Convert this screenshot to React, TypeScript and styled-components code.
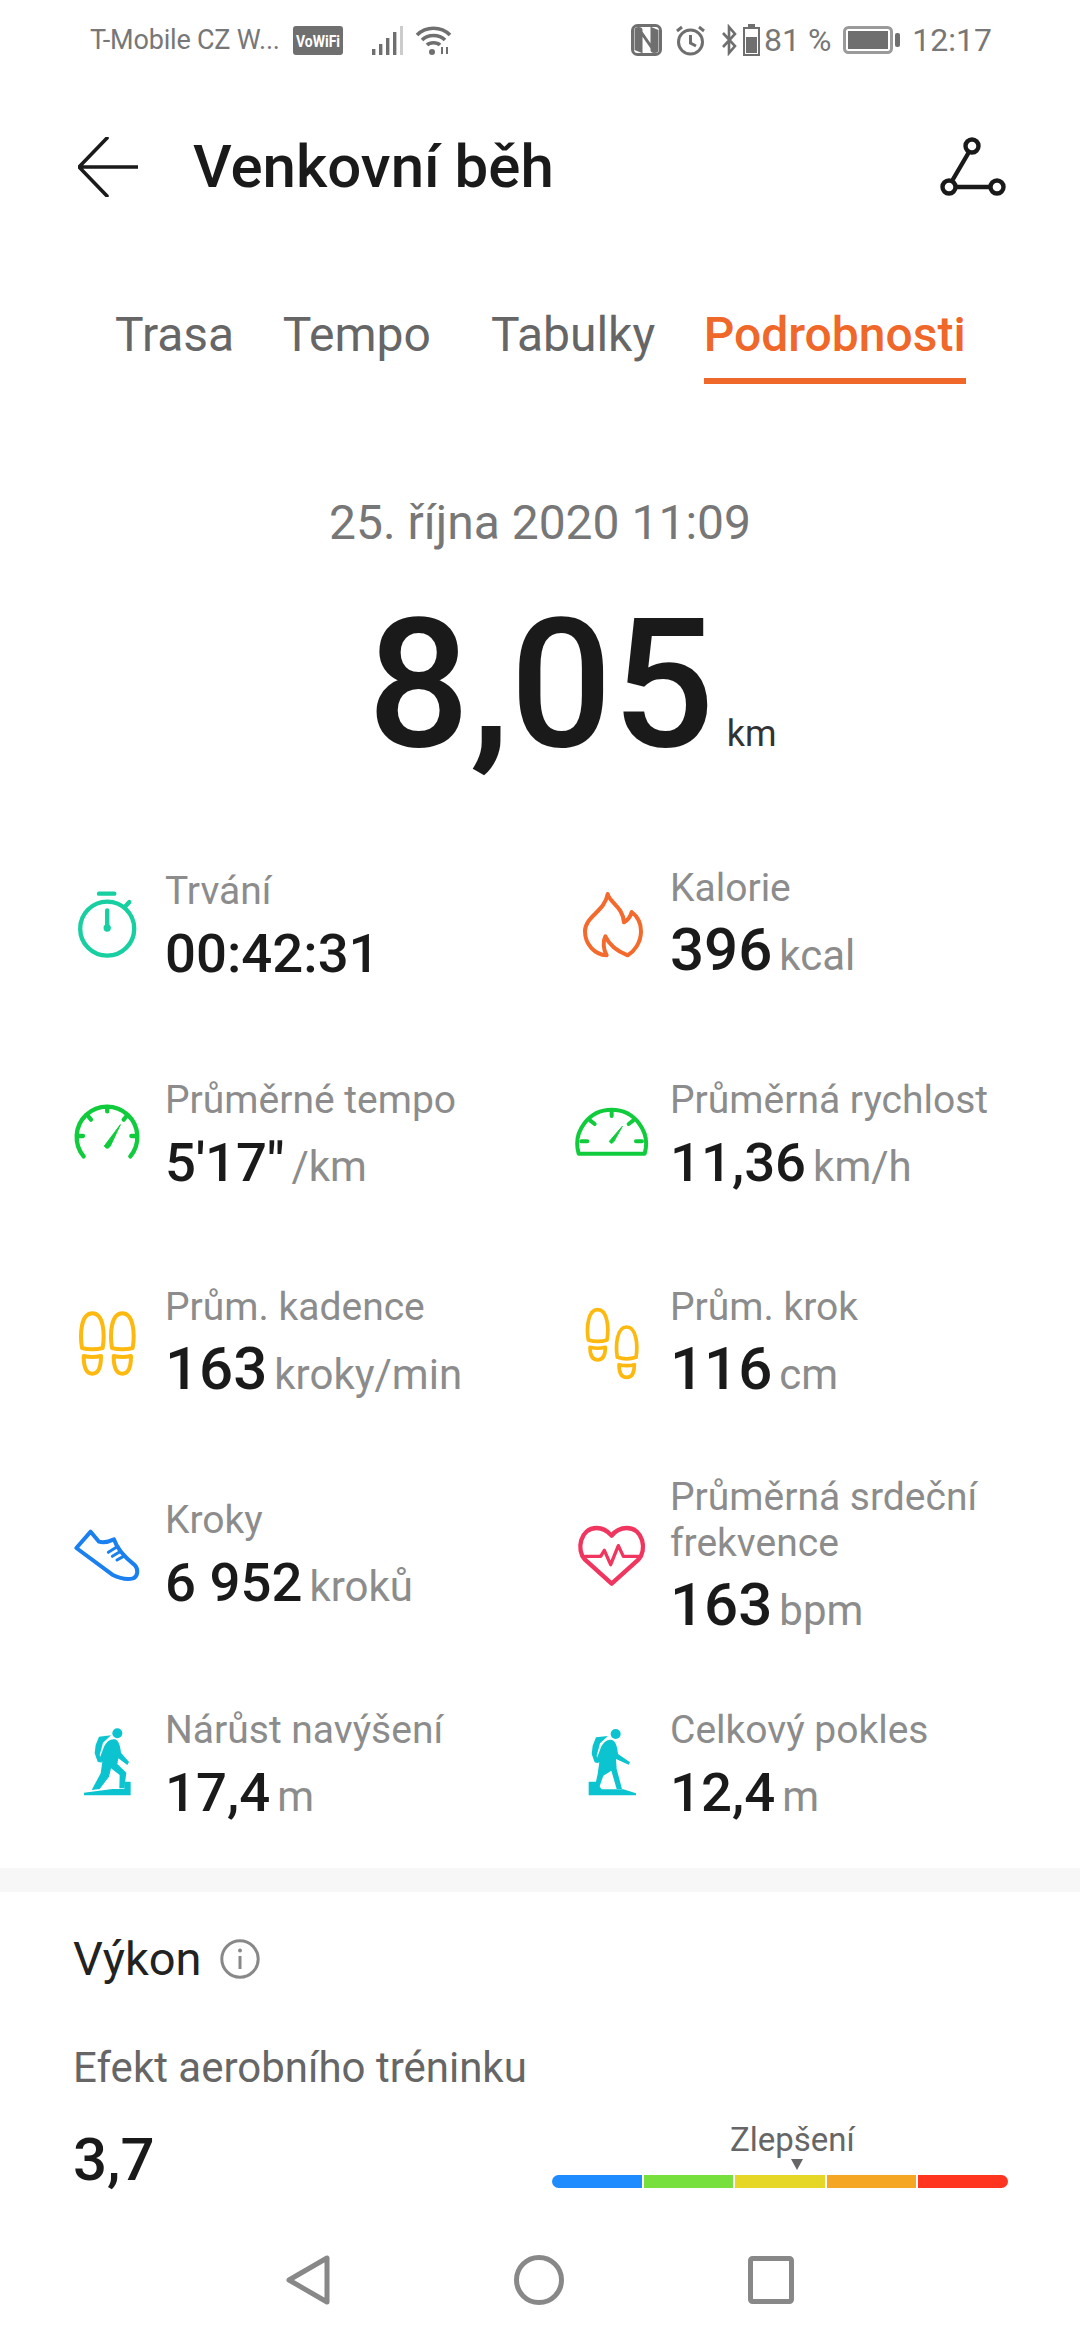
import React from "react";
import styled, { createGlobalStyle } from "styled-components";

const Global = createGlobalStyle`
  html, body { margin: 0; padding: 0; background: #fff; }
  body { font-family: Roboto, "Liberation Sans", sans-serif; }
`;

const Page = styled.div`
  width: 1080px; height: 2340px; overflow: hidden; background: #fff;
  display: flex; flex-direction: column;
`;
const StatusBar = styled.div`
  height: 80px; display: flex; align-items: center; padding: 0 88px 0 90px; box-sizing: border-box;
  color: #777;
`;
const Carrier = styled.span` font-size: 27px; flex: none; margin-right: 13px; letter-spacing: -0.2px; white-space: nowrap; `;
const StatusGroup = styled.div` display: flex; align-items: center; gap: ${p => p.$gap ?? 12}px; `;
const Spacer = styled.div` flex: 1; `;
const StatusNum = styled.span` font-size: 32px; white-space: nowrap; line-height: 40px; `;
const StatusIcon = styled.svg` display: block; flex: none; `;

const Header = styled.header`
  height: 174px; display: flex; align-items: center; padding: 0 74px 0 78px; box-sizing: border-box;
`;
const Title = styled.h1`
  margin: 0 0 0 55px; font-size: 60px; font-weight: 500; color: #1a1a1a; flex: 1; line-height: 70px;
`;
const Tabs = styled.nav` display: flex; padding: 54px 0 0 115px; height: 130px; box-sizing: border-box; `;
const Tab = styled.div`
  font-size: 48px; line-height: 54px; height: 76px; box-sizing: border-box; white-space: nowrap;
  margin-right: ${p => p.$gap}px; font-weight: ${p => (p.$active ? 500 : 400)};
  color: ${p => (p.$active ? "#f0672a" : "#666")};
  border-bottom: 6px solid ${p => (p.$active ? "#f0672a" : "transparent")};
`;
const DateLine = styled.div`
  margin-top: 113px; text-align: center; font-size: 48px; line-height: 52px; color: #777;
`;
const Hero = styled.div`
  margin-top: 51px; display: flex; justify-content: center; align-items: baseline; height: 170px; padding-left: 64px;
`;
const Big = styled.span` font-size: 180px; line-height: 170px; font-weight: 500; color: #1a1a1a; `;
const BigUnit = styled.span` font-size: 36px; color: #333; margin-left: 12px; `;

const Metrics = styled.section`
  margin-top: 50px; padding-left: 67px; display: grid; grid-template-columns: 505px 504px;
  grid-template-rows: 213px 210px 204px 222px 198px; margin-bottom: 1px;
`;
const Metric = styled.div` display: flex; align-items: center; gap: 18px; `;
const IconBox = styled.svg` width: 80px; height: 80px; flex: none; display: block; `;
const MetricText = styled.div` display: flex; flex-direction: column; `;
const Label = styled.div` font-size: 39px; line-height: 46px; color: #8c8c8c; width: 330px; `;
const ValueLine = styled.div` display: flex; align-items: baseline; margin-top: 7px; white-space: nowrap; line-height: 64px; `;
const Value = styled.span` font-size: ${p => (p.$large ? 60 : 54.5)}px; font-weight: 500; color: #1a1a1a; `;
const Unit = styled.span` font-size: 42px; color: #8c8c8c; margin-left: 7px; `;

const Band = styled.div` height: 24px; background: #f7f7f7; flex: none; `;
const Perf = styled.section` padding: 41px 72px 0 73px; `;
const PerfTitleRow = styled.div` display: flex; align-items: center; gap: 18px; `;
const PerfTitle = styled.span` font-size: 47px; line-height: 52px; color: #222; `;
const Efekt = styled.div` margin-top: 60px; font-size: 42px; line-height: 46px; color: #666; `;
const ScoreRow = styled.div` display: flex; justify-content: space-between; align-items: flex-end; margin-top: 24px; height: 80px; `;
const Score = styled.span` font-size: 60px; font-weight: 500; line-height: 70px; color: #1a1a1a; `;
const Scale = styled.div` width: 456px; display: flex; flex-direction: column; margin-bottom: 7px; `;
const ScaleLabel = styled.div` font-size: 33px; line-height: 36px; color: #666; padding-left: 178px; `;
const Marker = styled.div`
  width: 0; height: 0; margin: 1px 0 5px 239px;
  border-left: 6px solid transparent; border-right: 6px solid transparent; border-top: 11px solid #666;
`;
const Bar = styled.div` display: flex; gap: 2px; height: 13px; border-radius: 7px; overflow: hidden; `;
const Seg = styled.div` flex: 1; background: ${p => p.$c}; `;
const NavBar = styled.div`
  margin-top: auto; height: 120px; display: flex; justify-content: center; align-items: center; gap: 184px;
`;

const G = ({ c, sw = 10, children }: any) => (
  <g fill="none" stroke={c} strokeWidth={sw} strokeLinecap="round" strokeLinejoin="round">{children}</g>
);

const Stopwatch = () => (
  <IconBox viewBox="54 75 240 240">
    <G c="#17cfa0" sw={13}>
      <circle cx="174.6" cy="200" r="81" />
      <path d="M150 95H196M228 134L241 120M174.6 145V198" />
    </G>
    <circle cx="174.6" cy="198" r="11" fill="#17cfa0" />
  </IconBox>
);
const Flame = () => (
  <IconBox viewBox="36 72 240 240">
    <G c="#f4692c" sw={12}>
      <path d="M143 93C150 120 188 130 192 178C205 170 212 160 215 147C232 160 243 180 243 205C243 240 222 265 203 277C180 268 150 250 136 220C128 235 130 260 140 277C105 275 75 245 75 205C75 160 135 145 143 93Z" />
    </G>
  </IconBox>
);
const GaugeOpen = () => (
  <IconBox viewBox="54 718 240 240">
    <G c="#10cc3c" sw={13}>
      <path d="M104 893A91 91 0 1 1 244 893" />
      <path d="M174.6 745V758M86 832H102M247 832H263M117 772L126 783M233 772L224 783" />
    </G>
    <path d="M214 798L184 862Q175 876 166 862Z" fill="#10cc3c" stroke="#10cc3c" strokeWidth="3" strokeLinejoin="round" />
  </IconBox>
);
const GaugeDome = () => (
  <IconBox viewBox="36 718 240 240">
    <G c="#10cc3c" sw={12}>
      <path d="M56 885A103 103 0 1 1 254 885Z" />
      <path d="M155 755V772M64 848H82M228 848H246M90 785L104 796M220 785L206 796" />
    </G>
    <path d="M187 803L162 848Q154 860 148 848Z" fill="#10cc3c" stroke="#10cc3c" strokeWidth="3" strokeLinejoin="round" />
  </IconBox>
);
const Sole = ({ x, y }: any) => (
  <g transform={`translate(${x} ${y})`}>
    <path d="M-31 108C-38 65 -34 4 0 4C34 4 38 65 31 108C14 113 -14 113 -31 108Z" />
    <path d="M-26 132C-10 136 10 136 26 132C26 165 20 185 0 185C-20 185 -26 165 -26 132Z" />
  </g>
);
const SoleSmall = ({ x, y }: any) => (
  <g transform={`translate(${x} ${y})`}>
    <path d="M-28 95C-34 60 -30 4 0 4C30 4 34 60 28 95C12 100 -12 100 -28 95Z" />
    <path d="M-23 117C-10 120 10 120 23 117C23 140 18 155 0 155C-18 155 -23 140 -23 117Z" />
  </g>
);
const FeetEven = () => (
  <IconBox viewBox="54 1332 240 240">
    <G c="#fdb90f" sw={12}><Sole x={130} y={1353} /><Sole x={220} y={1353} /></G>
  </IconBox>
);
const FeetStep = () => (
  <IconBox viewBox="36 1332 240 240">
    <G c="#fdb90f" sw={11}><SoleSmall x={113} y={1342} /><SoleSmall x={200} y={1394} /></G>
  </IconBox>
);
const Shoe = () => (
  <IconBox viewBox="54 165 240 240">
    <G c="#1a80f0" sw={12}>
      <path d="M82 255L125 206L150 236C165 240 180 236 195 229C205 260 230 285 258 307C268 318 268 340 252 346C232 351 210 345 190 335Z" />
    </G>
    <G c="#1a80f0" sw={9}>
      <path d="M178 268L207 250M190 280L215 265M204 291L222 281" />
    </G>
  </IconBox>
);
const Heart = () => (
  <IconBox viewBox="36 165 240 240">
    <G c="#f0365f" sw={13}>
      <path d="M155 362L75 290C48 262 60 195 110 195C135 195 148 210 155 218C165 205 178 195 200 195C250 195 262 262 235 290Z" />
    </G>
    <G c="#f0365f" sw={10}>
      <path d="M75 280H122L133 262L152 305L175 248L190 280H238" />
    </G>
  </IconBox>
);
const HIKER =
  "M165 860C172 845 185 835 198 838C210 842 214 860 216 878L240 906L235 915L208 895L205 912L232 938L226 985H211L212 945L186 925L180 950L152 987L128 990L155 940L160 905L148 905Z";
const PACK = "M150 830L186 826L162 848L152 885L158 908L146 905L137 880L140 855Z";
const HikerUp = () => (
  <IconBox viewBox="54 804 240 240">
    <g fill="#0cc4cf">
      <circle cx="205" cy="820" r="15" />
      <path d={HIKER} />
      <path d={PACK} />
      <path d="M105 1006V998L190 987H226V965H245V1006Z" />
    </g>
  </IconBox>
);
const HikerDown = () => (
  <IconBox viewBox="36 804 240 240">
    <g fill="#0cc4cf">
      <circle cx="167" cy="822" r="15" />
      <g transform="translate(-42 2)">
        <path d="M165 860C172 845 185 835 198 838C210 842 214 860 216 880L252 905L248 912L210 895L212 925L228 985H212L196 930L172 945L158 985H145L155 940L160 905L148 905Z" />
        <path d={PACK} />
      </g>
      <path d="M86 1006V965H108L125 988H190L228 1000V1006Z" />
    </g>
  </IconBox>
);

const metrics = [
  { icon: <Stopwatch />, label: "Trvání", value: "00:42:31" },
  { icon: <Flame />, label: "Kalorie", value: "396", unit: "kcal", large: true },
  { icon: <GaugeOpen />, label: "Průměrné tempo", value: "5'17\"", unit: "/km" },
  { icon: <GaugeDome />, label: "Průměrná rychlost", value: "11,36", unit: "km/h" },
  { icon: <FeetEven />, label: "Prům. kadence", value: "163", unit: "kroky/min", large: true },
  { icon: <FeetStep />, label: "Prům. krok", value: "116", unit: "cm", large: true },
  { icon: <Shoe />, label: "Kroky", value: "6 952", unit: "kroků" },
  { icon: <Heart />, label: "Průměrná srdeční frekvence", value: "163", unit: "bpm", large: true },
  { icon: <HikerUp />, label: "Nárůst navýšení", value: "17,4", unit: "m" },
  { icon: <HikerDown />, label: "Celkový pokles", value: "12,4", unit: "m" },
];

const tabs = [
  { t: "Trasa", gap: 48.5 },
  { t: "Tempo", gap: 60 },
  { t: "Tabulky", gap: 48.5 },
  { t: "Podrobnosti", gap: 0, active: true },
];

const C = "#6f6f6f";

export default function App() {
  return (
    <Page>
      <Global />
      <StatusBar>
        <Carrier>T-Mobile CZ W...</Carrier>
        <StatusIcon width="50" height="29" viewBox="0 0 50 29">
          <rect width="50" height="29" rx="3" fill={C} />
          <text x="25" y="21" textAnchor="middle" fontSize="17" fontWeight="700" fill="#fff" fontFamily="Roboto" textLength="44" lengthAdjust="spacingAndGlyphs">VoWiFi</text>
        </StatusIcon>
        <StatusIcon width="31" height="29" viewBox="0 0 31 29" style={{ marginLeft: 29 }}>
          <g fill={C}>
            <rect x="0" y="23" width="3.4" height="6" />
            <rect x="7" y="18" width="3.4" height="11" />
            <rect x="14" y="12" width="3.4" height="17" />
            <rect x="21" y="6" width="3.4" height="23" />
          </g>
          <rect x="28" y="0" width="3" height="29" fill="#ccc" />
        </StatusIcon>
        <StatusIcon width="37" height="29" viewBox="0 0 37 29" style={{ marginLeft: 12 }}>
          <g fill="none" stroke={C} strokeWidth="3.6">
            <path d="M2 9C11 0 26 0 35 9" />
            <path d="M7 14C13 8 24 8 30 14" />
            <path d="M12 19C15 16 22 16 25 19" />
          </g>
          <circle cx="17" cy="26" r="3" fill={C} />
          <path d="M27 28V21M32 28V21" stroke={C} strokeWidth="2" />
        </StatusIcon>
        <Spacer />
        <StatusGroup $gap={12}>
          <StatusIcon width="31" height="32" viewBox="0 0 31 32">
            <rect x="1.5" y="1.5" width="28" height="29" rx="5" fill="#fff" stroke={C} strokeWidth="3" />
            <path d="M5 6C5 4 10 4 10 6V27L5 25ZM26 26C26 28 21 28 21 26V5L26 7ZM10 8L21 24" fill={C} stroke={C} strokeWidth="3" />
          </StatusIcon>
          <StatusIcon width="33" height="32" viewBox="0 0 33 32">
            <g fill="none" stroke={C} strokeWidth="3">
              <circle cx="16.5" cy="18" r="12" />
              <path d="M16.5 11V19L22 22M3 7L8 3M30 7L25 3" />
            </g>
          </StatusIcon>
          <StatusGroup $gap={4}>
            <StatusIcon width="20" height="32" viewBox="0 0 20 32">
              <path d="M4 9L16 22L10 29V3L16 10L4 23" fill="none" stroke={C} strokeWidth="2.6" />
            </StatusIcon>
            <StatusIcon width="17" height="32" viewBox="0 0 17 32">
              <rect x="5" y="0" width="7" height="3" fill={C} />
              <rect x="1" y="4" width="15" height="27" fill="none" stroke={C} strokeWidth="2" />
              <rect x="3" y="13" width="11" height="16" fill={C} />
            </StatusIcon>
            <StatusNum>81 %</StatusNum>
          </StatusGroup>
          <StatusIcon width="57" height="28" viewBox="0 0 57 28">
            <rect x="1.5" y="1.5" width="47" height="25" rx="4" fill="none" stroke="#9a9a9a" strokeWidth="3" />
            <rect x="5" y="5" width="40" height="18" fill={C} />
            <rect x="52" y="7" width="5" height="14" rx="2" fill={C} />
          </StatusIcon>
          <StatusNum>12:17</StatusNum>
        </StatusGroup>
      </StatusBar>

      <Header>
        <svg width="60" height="60" viewBox="0 0 60 60" style={{ flex: "none" }}>
          <path d="M29 1L1 30L29 59M1 30H60" fill="none" stroke="#1a1a1a" strokeWidth="3.6" strokeLinecap="round" strokeLinejoin="round" />
        </svg>
        <Title>Venkovní běh</Title>
        <svg width="66" height="60" viewBox="0 0 66 60" style={{ flex: "none" }}>
          <g fill="none" stroke="#1a1a1a" strokeWidth="4.4">
            <circle cx="32" cy="9" r="6.5" />
            <circle cx="9" cy="50" r="6.5" />
            <circle cx="57" cy="50" r="6.5" />
            <path d="M29 15L12 44M16 50H50" />
          </g>
        </svg>
      </Header>

      <Tabs>
        {tabs.map(t => (
          <Tab key={t.t} $gap={t.gap} $active={t.active}>{t.t}</Tab>
        ))}
      </Tabs>

      <DateLine>25. října 2020 11:09</DateLine>
      <Hero>
        <Big>8,05</Big>
        <BigUnit>km</BigUnit>
      </Hero>

      <Metrics>
        {metrics.map(m => (
          <Metric key={m.label}>
            {m.icon}
            <MetricText>
              <Label>{m.label}</Label>
              <ValueLine>
                <Value $large={m.large}>{m.value}</Value>
                {m.unit && <Unit>{m.unit}</Unit>}
              </ValueLine>
            </MetricText>
          </Metric>
        ))}
      </Metrics>

      <Band />
      <Perf>
        <PerfTitleRow>
          <PerfTitle>Výkon</PerfTitle>
          <svg width="40" height="40" viewBox="0 0 40 40">
            <circle cx="20" cy="20" r="18.2" fill="none" stroke="#888" strokeWidth="3" />
            <path d="M20 17V30" stroke="#888" strokeWidth="3" />
            <circle cx="20" cy="11.5" r="2" fill="#888" />
          </svg>
        </PerfTitleRow>
        <Efekt>Efekt aerobního tréninku</Efekt>
        <ScoreRow>
          <Score>3,7</Score>
          <Scale>
            <ScaleLabel>Zlepšení</ScaleLabel>
            <Marker />
            <Bar>
              {["#1e8cff", "#78e03c", "#e6d625", "#f5a623", "#ff3520"].map(c => <Seg key={c} $c={c} />)}
            </Bar>
          </Scale>
        </ScoreRow>
      </Perf>

      <NavBar>
        <svg width="44" height="50" viewBox="0 0 44 50">
          <path d="M41 3V47L3 25Z" fill="none" stroke="#888" strokeWidth="5" strokeLinejoin="round" />
        </svg>
        <svg width="50" height="50" viewBox="0 0 50 50">
          <circle cx="25" cy="25" r="22.5" fill="none" stroke="#888" strokeWidth="5" />
        </svg>
        <svg width="46" height="48" viewBox="0 0 46 48">
          <rect x="2.5" y="2.5" width="41" height="43" rx="2" fill="none" stroke="#888" strokeWidth="5" />
        </svg>
      </NavBar>
    </Page>
  );
}
